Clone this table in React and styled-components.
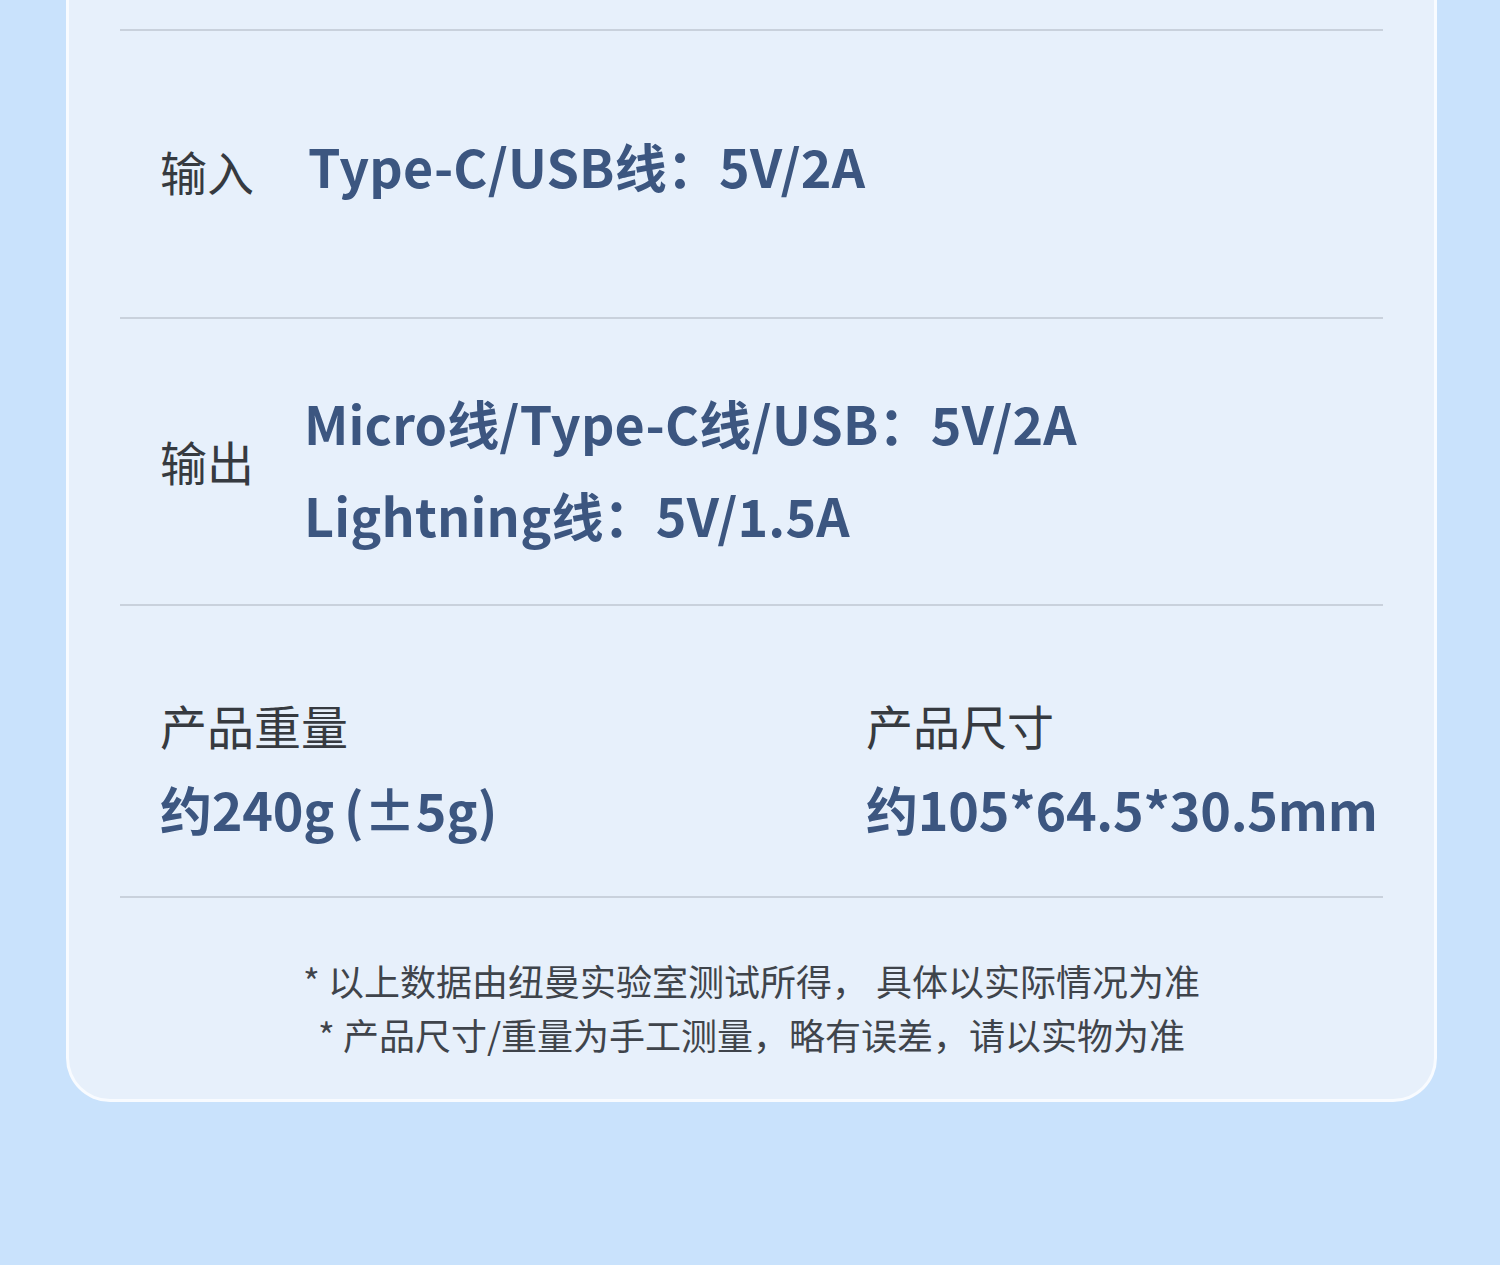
import styled, { createGlobalStyle } from "styled-components";

const GlobalStyle = createGlobalStyle`
  html, body {
    margin: 0;
    padding: 0;
    background: #c9e2fc;
  }
  body {
    font-family: "Noto Sans CJK SC", "Noto Sans", sans-serif;
  }
`;

const Page = styled.div`
  width: 1500px;
  height: 1265px;
  box-sizing: border-box;
  padding: 0 63px 0 66px;
  background: #c9e2fc;
  overflow: hidden;
`;

const Card = styled.div`
  box-sizing: border-box;
  width: 1371px;
  background: #e7f0fb;
  border: 3px solid #f8fbff;
  border-top: none;
  border-radius: 0 0 44px 44px;
  padding: 29px 51px 0 51px;
  height: 1102px;
`;

const Divider = styled.div`
  height: 2px;
  background: #c9d1dc;
`;

const SpecRow = styled.div`
  height: ${p => p.$height}px;
  box-sizing: border-box;
  display: flex;
  align-items: center;
  padding-left: 40px;
  padding-bottom: ${p => p.$lift || 0}px;
  gap: ${p => p.$gap || 52}px;
`;

const Label = styled.div`
  font-size: 47px;
  font-weight: 400;
  color: #363a40;
  white-space: nowrap;
  line-height: 1.2;
`;

const Values = styled.div`
  display: flex;
  flex-direction: column;
  margin-top: ${p => p.$shift || 0}px;
  margin-bottom: ${p => p.$raise || 0}px;
`;

const Value = styled.div`
  font-size: 52px;
  font-weight: 700;
  color: #3c5680;
  line-height: 92px;
  white-space: nowrap;
  letter-spacing: 0.2px;
`;

const DoubleRow = styled.div`
  height: 290px;
  display: grid;
  grid-template-columns: 706px 1fr;
  align-items: center;
  padding-left: 40px;
  padding-top: 36px;
  box-sizing: border-box;
`;

const Column = styled.div`
  display: flex;
  flex-direction: column;
  gap: 24px;
`;

const ColValue = styled(Value)`
  line-height: 64px;
  letter-spacing: -0.2px;
`;

const Paren = styled.span`
  margin-left: 10px;
  letter-spacing: 0;
`;

const Notes = styled.div`
  padding-top: 55px;
  text-align: center;
  font-size: 36px;
  line-height: 54px;
  color: #3f444b;
`;

export default function App() {
  return (
    <Page>
      <GlobalStyle />
      <Card>
        <Divider />
        <SpecRow $height={286} $lift={6} $gap={54}>
          <Label>输入</Label>
          <Values $raise={10}>
            <Value>Type-C/USB线：5V/2A</Value>
          </Values>
        </SpecRow>
        <Divider />
        <SpecRow $height={285} $gap={50}>
          <Label>输出</Label>
          <Values $shift={14}>
            <Value>Micro线/Type-C线/USB：5V/2A</Value>
            <Value>Lightning线：5V/1.5A</Value>
          </Values>
        </SpecRow>
        <Divider />
        <DoubleRow>
          <Column>
            <Label>产品重量</Label>
            <ColValue>
              约240g<Paren>(±5g)</Paren>
            </ColValue>
          </Column>
          <Column>
            <Label>产品尺寸</Label>
            <ColValue>约105*64.5*30.5mm</ColValue>
          </Column>
        </DoubleRow>
        <Divider />
        <Notes>
          <div>* 以上数据由纽曼实验室测试所得， 具体以实际情况为准</div>
          <div>* 产品尺寸/重量为手工测量，略有误差，请以实物为准</div>
        </Notes>
      </Card>
    </Page>
  );
}
